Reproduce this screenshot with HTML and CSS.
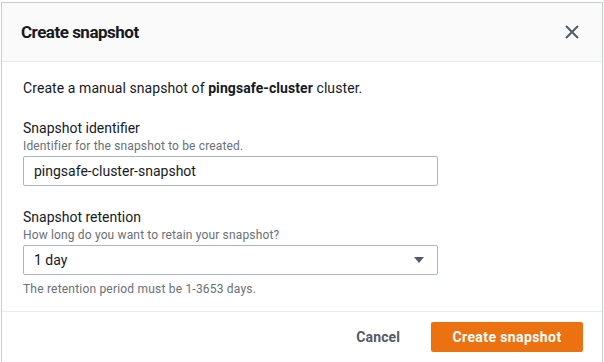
FILE: index.html
```html
<!DOCTYPE html>
<html lang="en">
<head>
    <meta charset="UTF-8">
    <title>Create snapshot</title>
    <link rel="stylesheet" href="styles.css">
</head>
<body>
    <div class="modal">
        <div class="modal-header">
            <h2>Create snapshot</h2>
            <button class="close-btn" aria-label="Close">
                <svg width="14" height="14" viewBox="0 0 14 14">
                    <path d="M1 1 L13 13 M13 1 L1 13" stroke="#545b64" stroke-width="2" fill="none"/>
                </svg>
            </button>
        </div>
        <div class="modal-body">
            <p class="intro">Create a manual snapshot of <strong>pingsafe-cluster</strong> cluster.</p>

            <div class="field">
                <label class="field-label">Snapshot identifier</label>
                <div class="field-desc">Identifier for the snapshot to be created.</div>
                <div class="input-box">pingsafe-cluster-snapshot</div>
            </div>

            <div class="field">
                <label class="field-label">Snapshot retention</label>
                <div class="field-desc">How long do you want to retain your snapshot?</div>
                <div class="input-box select-box">
                    <span>1 day</span>
                    <svg width="10" height="6" viewBox="0 0 10 6">
                        <path d="M0 0 L10 0 L5 6 Z" fill="#545b64"/>
                    </svg>
                </div>
                <div class="field-hint">The retention period must be 1-3653 days.</div>
            </div>
        </div>
        <div class="modal-footer">
            <button class="btn-link">Cancel</button>
            <button class="btn-primary">Create snapshot</button>
        </div>
    </div>
</body>
</html>
```

FILE: styles.css
```css
body {
    margin: 0;
    background-color: #fff;
    font-family: Roboto, "Liberation Sans", sans-serif;
    color: #16191f;
}

.modal {
    margin: 2px 1px 0 1px;
    height: 360px;
    border: 1px solid #c9cdd0;
    border-bottom: none;
    box-sizing: border-box;
    display: flex;
    flex-direction: column;
}

.modal-header {
    background-color: #fafafa;
    border-bottom: 1px solid #eaeded;
    height: 58px;
    padding: 0 19px;
    display: flex;
    align-items: center;
    justify-content: space-between;
}

.modal-header h2 {
    margin: 0;
    font-size: 17px;
    font-weight: 700;
    letter-spacing: -0.5px;
}

.close-btn {
    background: none;
    border: none;
    padding: 0;
    margin-right: 4px;
    display: flex;
}

.modal-body {
    padding: 16px 21px 0;
    height: 249px;
    box-sizing: border-box;
}

.intro {
    margin: 0 0 20px;
    font-size: 14px;
    line-height: 20px;
    letter-spacing: 0.08px;
}

.field {
    margin-bottom: 21px;
}

.field-label {
    display: block;
    font-size: 14px;
    line-height: 20px;
}

.field-desc {
    font-size: 12px;
    line-height: 16px;
    color: #687078;
    letter-spacing: 0.15px;
    margin-bottom: 2px;
}

.input-box {
    width: 415px;
    height: 30px;
    box-sizing: border-box;
    border: 1px solid #aab7b8;
    border-radius: 2px;
    padding: 0 10px;
    font-size: 14px;
    display: flex;
    align-items: center;
}

.select-box {
    justify-content: space-between;
    padding-right: 13px;
}

.field-hint {
    font-size: 12px;
    line-height: 16px;
    color: #687078;
    letter-spacing: 0.2px;
    margin-top: 6px;
}

.modal-footer {
    flex: 1;
    border-top: 1px solid #eaeded;
    display: flex;
    align-items: flex-start;
    justify-content: flex-end;
    padding: 10px 19px 0;
    gap: 31px;
}

.btn-link {
    background: none;
    border: none;
    font-family: inherit;
    font-size: 14px;
    font-weight: 700;
    color: #545b64;
    height: 30px;
    padding: 0;
    letter-spacing: 0.1px;
}

.btn-primary {
    background-color: #ec7211;
    border: none;
    border-radius: 2px;
    color: #fff;
    font-family: inherit;
    font-size: 14px;
    font-weight: 700;
    letter-spacing: 0.4px;
    height: 30px;
    width: 152px;
    padding: 0;
}
```
